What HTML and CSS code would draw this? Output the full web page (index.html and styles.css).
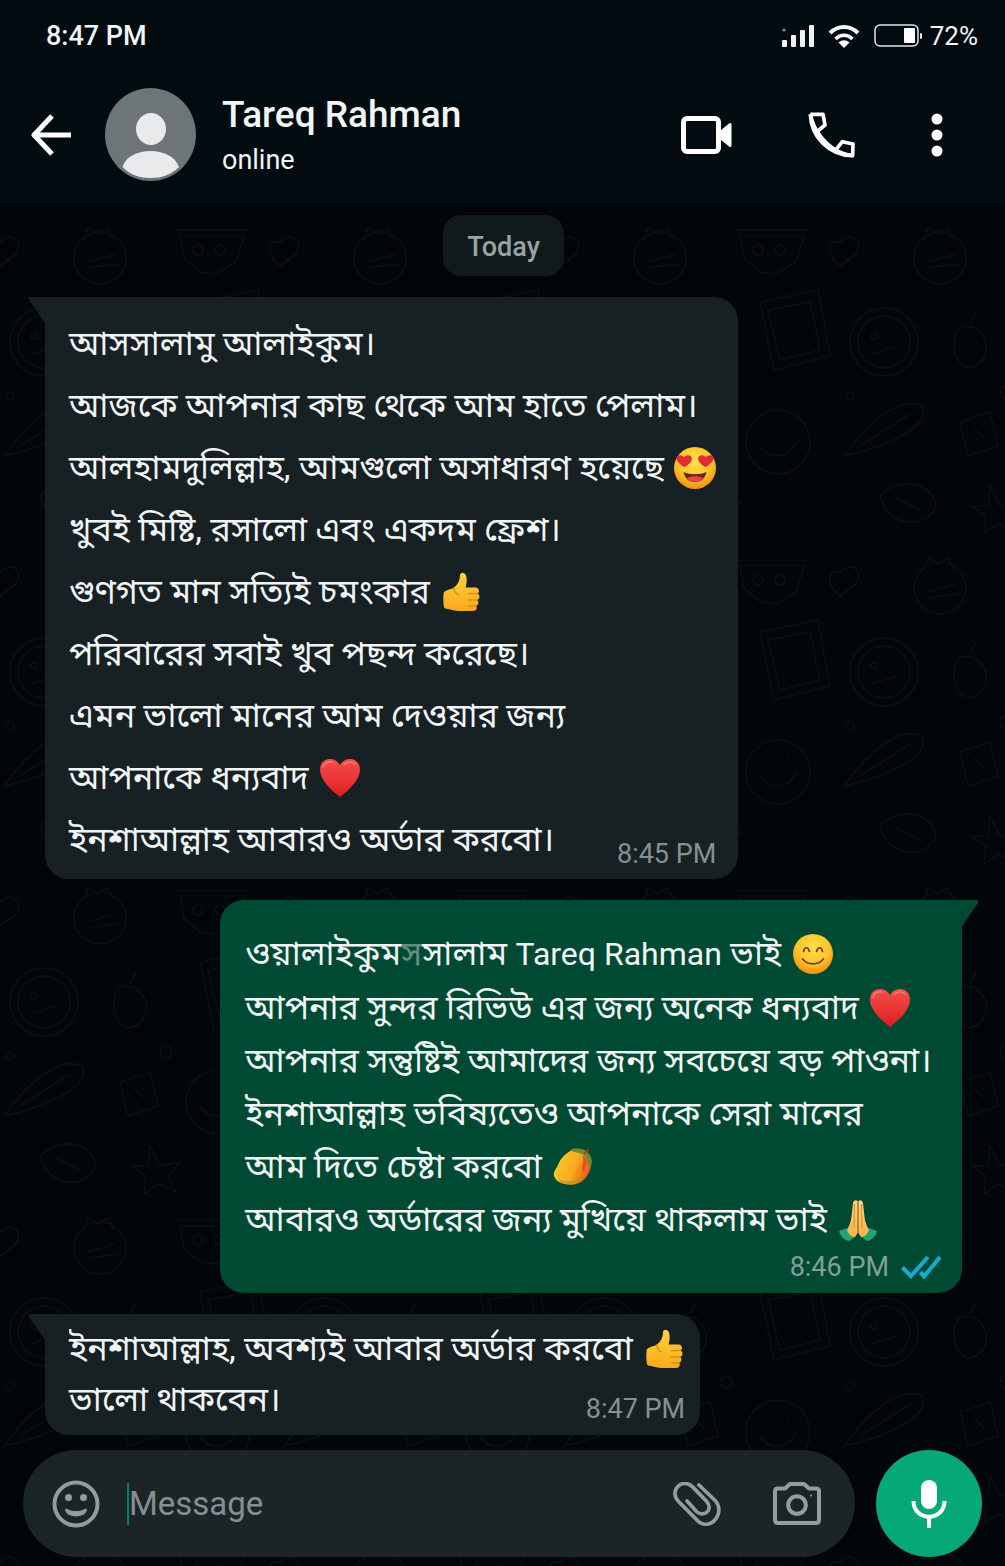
FILE: index.html
```html
<!DOCTYPE html>
<html lang="bn">
<head>
    <meta charset="UTF-8">
    <meta name="viewport" content="width=device-width, initial-scale=1.0">
    <title>Tareq Rahman</title>
    <link rel="stylesheet" href="styles.css">
</head>
<body>
    <!-- shared emoji drawings -->
    <svg class="defs" width="0" height="0" aria-hidden="true">
        <defs>
            <radialGradient id="face" cx="50%" cy="35%" r="65%">
                <stop offset="0" stop-color="#ffe04a"/>
                <stop offset="0.6" stop-color="#fdc52c"/>
                <stop offset="1" stop-color="#f08f16"/>
            </radialGradient>
            <linearGradient id="hand" x1="0" y1="0" x2="0" y2="1">
                <stop offset="0" stop-color="#ffd23c"/>
                <stop offset="1" stop-color="#f9a91c"/>
            </linearGradient>
            <linearGradient id="red" x1="0" y1="0" x2="0" y2="1">
                <stop offset="0" stop-color="#f4504a"/>
                <stop offset="1" stop-color="#e01c22"/>
            </linearGradient>
            <linearGradient id="fruit" x1="0" y1="0.2" x2="1" y2="0.6">
                <stop offset="0" stop-color="#f9cf2c"/>
                <stop offset="0.6" stop-color="#f6a81c"/>
                <stop offset="1" stop-color="#e8501e"/>
            </linearGradient>
            <linearGradient id="palm" x1="0" y1="0" x2="0" y2="1">
                <stop offset="0" stop-color="#ffd878"/>
                <stop offset="1" stop-color="#f9b24a"/>
            </linearGradient>
            <symbol id="heart-eyes" viewBox="0 0 42 44">
                <circle cx="21" cy="22" r="21" fill="url(#face)"/>
                <path d="M10 21C4 17 1 13 3 10.500C5 8.500 8.500 9 10 11.500C12 8.500 16 8.500 17.500 11C19 15 15 19 10 21Z" fill="#e62a33"/>
                <path d="M32 21C38 17 41 13 39 10.500C37 8.500 33.500 9 32 11.500C30 8.500 26 8.500 24.500 11C23 15 27 19 32 21Z" fill="#e62a33"/>
                <path d="M9.500 26C16 29 26 29 32.500 26C31 33 26.500 36 21 36S11 33 9.500 26Z" fill="#6d2410"/>
                <path d="M13 32C17 29.500 25 29.500 29 32C27 34.700 24.500 36 21 36S15 34.700 13 32Z" fill="#e4473d"/>
            </symbol>
            <symbol id="smile" viewBox="0 0 42 44">
                <circle cx="21" cy="22" r="20" fill="url(#face)"/>
                <path d="M11.500 19.500C12.500 14.500 16 14.500 17.500 19.500M24.500 19.500C26 14.500 29.500 14.500 30.500 19.500M10.500 27C16 33.500 26 33.500 31.500 27" fill="none" stroke="#7a3d10" stroke-width="1.700" stroke-linecap="round"/>
            </symbol>
            <symbol id="thumb" viewBox="0 0 42 44">
                <path d="M4 22C7 19.500 11 19.500 14 17.500C18 14.500 20 10 20 5.500C20 2 24.500 1.500 26 5.500C27.300 9.500 26.500 14 25.500 17.500L35.500 17.500C39.500 18 40 22.500 37.500 23.500C40.500 25 40 29.300 37 30C39.500 31.500 38.500 35.300 36 36C38 38 36 41 33 41L18 41C13 41 9 38.500 5 38.500C3 38 3 24 4 22Z" fill="url(#hand)"/>
                <path d="M37.500 23.500L28 23.700M37 30L28 30M36 36L28 35.800M14 18C14 21 16 24 19 25" fill="none" stroke="#e08a10" stroke-width="1.300" stroke-linecap="round"/>
            </symbol>
            <symbol id="heart" viewBox="0 0 42 44">
                <path d="M21 41C12 34 1 24 1 13.500C1 7 5.500 3 11 3C15.500 3 19 5.500 21 9C23 5.500 26.500 3 31 3C36.500 3 41 7 41 13.500C41 24 30 34 21 41Z" fill="url(#red)"/>
                <path d="M4 11C5.500 6.500 9.500 5 13 6M25 8.500C28 5.500 33 5 36 8" fill="none" stroke="#ff9a90" stroke-width="1.600" stroke-linecap="round" opacity="0.600"/>
            </symbol>
            <symbol id="mango" viewBox="0 0 42 44">
                <path d="M2 31C1 27 4 24 6 20C9 12 16 5 25 4C33 3 40 9 39.500 18C39 28 32 38 22 39.500C14 40.500 4 38 2 31Z" fill="url(#fruit)"/>
                <path d="M18 5C23 2 30 3 34 7C40 10 41 17 38 23C35 20 36 14 32 10C28 7 22 8 18 5Z" fill="#6d8b2c"/>
                <path d="M30 10C36 12 36 20 31 27C28 23 34 16 30 10Z" fill="#ef4a22"/>
                <path d="M33 8L36 5" stroke="#a5402a" stroke-width="2" stroke-linecap="round"/>
                <path d="M6 34C14 39 27 37 34 26C31 35 25 39.500 17 39C12 38.500 8 37 6 34Z" fill="#b9901c" opacity="0.700"/>
            </symbol>
            <symbol id="pray" viewBox="0 0 42 44">
                <path d="M2 33L10 30L19 38L12 43C7 42 3 38 2 33Z" fill="#1ea672"/>
                <path d="M40 33L32 30L23 38L30 43C35 42 39 38 40 33Z" fill="#1ea672"/>
                <path d="M20.600 3C18 1 16 3 15.800 7L14.500 19C14 24 12 28 10 32C12 37 15 39 18 39L20.600 35Z" fill="url(#palm)"/>
                <path d="M21.400 3C24 1 26 3 26.200 7L27.500 19C28 24 30 28 32 32C30 37 27 39 24 39L21.400 35Z" fill="url(#palm)"/>
                <path d="M21 4L21 35M17.500 6L17 30M24.500 6L25 30" stroke="#d97f28" stroke-width="0.900"/>
            </symbol>
        </defs>
    </svg>

    <div class="phone">
        <header class="top">
            <div class="status">
                <span class="clock">8:47 PM</span>
                <div class="indicators">
                    <svg width="32" height="24" viewBox="0 0 32 24" fill="#eef4f5" aria-hidden="true">
                        <rect x="0" y="16" width="5" height="7" rx="1"/>
                        <rect x="9" y="11" width="5" height="12" rx="1"/>
                        <rect x="18" y="6" width="5" height="17" rx="1"/>
                        <rect x="27" y="1" width="5" height="22" rx="1"/>
                        <circle cx="2" cy="6" r="1.500" opacity="0.600"/>
                    </svg>
                    <svg width="32" height="24" viewBox="0 0 32 24" fill="none" stroke="#f4f8f9" stroke-width="4" aria-hidden="true">
                        <path d="M2 9C10 1 22 1 30 9"/>
                        <path d="M7.500 15C12.500 10 19.500 10 24.500 15" stroke-width="3.500"/>
                        <path d="M10.500 18.500C14 15.500 18 15.500 21.500 18.500L16 24Z" fill="#f4f8f9" stroke="none"/>
                    </svg>
                    <svg width="49" height="24" viewBox="0 0 49 24" aria-hidden="true">
                        <rect x="1" y="1" width="43" height="21" rx="5" fill="none" stroke="#dfe6e8" stroke-width="1.500"/>
                        <rect x="30" y="4" width="11" height="15" rx="1" fill="#fff"/>
                        <rect x="46" y="9" width="2" height="6" rx="1" fill="#dfe6e8"/>
                    </svg>
                    <span class="percent">72%</span>
                </div>
            </div>

            <div class="contact">
                <button class="icon-btn" aria-label="Back">
                    <svg width="40" height="42" viewBox="0 0 40 42" fill="none" stroke="#fff" stroke-width="5">
                        <path d="M21 2L3 21L21 40M3 21L40 21" stroke-linejoin="round"/>
                    </svg>
                </button>
                <svg class="avatar" width="91" height="93" viewBox="0 0 91 93" aria-hidden="true">
                    <ellipse cx="45.500" cy="46.500" rx="45.500" ry="46.500" fill="#6d7579"/>
                    <ellipse cx="46" cy="41" rx="15" ry="16" fill="#e9eaeb"/>
                    <path d="M17.500 79C21 68 33 63 45.500 63S70 68 74 79C66 87 56 90 45.500 90S25 87 17.500 79Z" fill="#e9eaeb"/>
                </svg>
                <div class="who">
                    <h1 class="name">Tareq Rahman</h1>
                    <p class="presence">online</p>
                </div>
                <div class="actions">
                    <button class="icon-btn" aria-label="Video call">
                        <svg width="51" height="38" viewBox="0 0 51 38">
                            <rect x="2.500" y="2.500" width="35" height="33" rx="3.500" fill="none" stroke="#fff" stroke-width="5"/>
                            <path d="M39 15L48 7.500C49.500 6.500 50.500 7 50.500 8.500L50.500 29.500C50.500 31 49.500 31.500 48 30.500L39 23Z" fill="#fff"/>
                        </svg>
                    </button>
                    <button class="icon-btn" aria-label="Voice call">
                        <svg width="47" height="46" viewBox="0 0 141 138" fill="none" stroke="#fff" stroke-width="11" stroke-linejoin="round">
                            <path d="M7 7L45 7L51 39L28 58M7 7C9 76 66 131 134 131L135 96L103 89L84 113"/>
                            <path d="M7 7C12 28 17 43 28 59C42 82 60 100 84 115C100 124 116 128 134 131"/>
                        </svg>
                    </button>
                    <button class="icon-btn" aria-label="More options">
                        <svg width="12" height="44" viewBox="0 0 12 44" fill="#fff">
                            <circle cx="6" cy="6" r="5.500"/>
                            <circle cx="6" cy="22" r="5.500"/>
                            <circle cx="6" cy="38" r="5.500"/>
                        </svg>
                    </button>
                </div>
            </div>
        </header>

        <main class="chat">
            <svg class="wallpaper" width="100%" height="100%" aria-hidden="true">
                <defs>
                    <pattern id="doodles" width="280" height="330" patternUnits="userSpaceOnUse">
                        <g fill="none" stroke="#091114" stroke-width="1.200">
                            <path d="M280 60C265 48 268 32 280 36M0 36C10 26 24 32 16 48L0 60"/>
                            <circle cx="100" cy="52" r="26"/>
                            <path d="M84 34L88 22L98 28L108 22L114 34M88 56L116 48M88 62L118 58"/>
                            <path d="M180 30L244 30L236 56L216 68L200 66L184 52ZM176 24L250 24"/>
                            <circle cx="198" cy="44" r="5"/>
                            <circle cx="220" cy="44" r="5"/>
                            <path d="M200 96L258 84L270 150L214 164ZM208 104L250 96L260 144L220 154Z"/>
                            <circle cx="44" cy="136" r="34"/>
                            <circle cx="44" cy="136" r="26"/>
                            <circle cx="34" cy="130" r="3"/>
                            <path d="M32 148L56 140"/>
                            <path d="M120 120C110 134 112 158 130 162C146 158 152 140 140 126C134 118 126 122 120 120ZM130 118L136 106"/>
                            <path d="M4 250C30 214 60 190 82 200C90 214 66 236 4 250ZM20 240L70 208"/>
                            <path d="M120 216L150 206L158 240L128 250ZM134 222L144 232"/>
                            <circle cx="218" cy="236" r="32"/>
                            <path d="M200 240C210 256 230 252 236 236M206 226L210 226M226 222L230 222"/>
                            <circle cx="166" cy="186" r="6"/>
                            <circle cx="10" cy="190" r="4"/>
                            <path d="M40 290C60 270 92 276 96 300C90 320 50 326 40 290ZM56 292L80 304"/>
                            <path d="M150 280L160 300L180 296L168 310L176 326L158 318L144 328L146 310L132 300L148 300Z"/>
                        </g>
                    </pattern>
                </defs>
                <rect width="100%" height="100%" fill="url(#doodles)"/>
            </svg>

            <div class="day">Today</div>

            <article class="bubble received long">
                <p>আসসালামু আলাইকুম।</p>
                <p>আজকে আপনার কাছ থেকে আম হাতে পেলাম।</p>
                <p>আলহামদুলিল্লাহ, আমগুলো অসাধারণ হয়েছে <svg class="emoji" role="img" aria-label="😍"><use href="#heart-eyes"/></svg></p>
                <p>খুবই মিষ্টি, রসালো এবং একদম ফ্রেশ।</p>
                <p>গুণগত মান সত্যিই চমংকার <svg class="emoji" role="img" aria-label="👍"><use href="#thumb"/></svg></p>
                <p>পরিবারের সবাই খুব পছন্দ করেছে।</p>
                <p>এমন ভালো মানের আম দেওয়ার জন্য</p>
                <p>আপনাকে ধন্যবাদ <svg class="emoji" role="img" aria-label="❤️"><use href="#heart"/></svg></p>
                <div class="last">
                    <p>ইনশাআল্লাহ আবারও অর্ডার করবো।</p>
                    <time class="time">8:45 PM</time>
                </div>
            </article>

            <article class="bubble sent">
                <p>ওয়ালাইকুম<span class="faded">স</span>সালাম <span class="latin">Tareq Rahman</span> ভাই <svg class="emoji" role="img" aria-label="😊"><use href="#smile"/></svg></p>
                <p>আপনার সুন্দর রিভিউ এর জন্য অনেক ধন্যবাদ <svg class="emoji" role="img" aria-label="❤️"><use href="#heart"/></svg></p>
                <p>আপনার সন্তুষ্টিই আমাদের জন্য সবচেয়ে বড় পাওনা।</p>
                <p>ইনশাআল্লাহ ভবিষ্যতেও আপনাকে সেরা মানের</p>
                <p>আম দিতে চেষ্টা করবো <svg class="emoji" role="img" aria-label="🥭"><use href="#mango"/></svg></p>
                <p>আবারও অর্ডারের জন্য মুখিয়ে থাকলাম ভাই <svg class="emoji" role="img" aria-label="🙏"><use href="#pray"/></svg></p>
                <div class="receipt">
                    <time class="time">8:46 PM</time>
                    <svg width="40" height="24" viewBox="0 0 40 24" fill="none" stroke="#14acd0" stroke-width="4" role="img" aria-label="Read">
                        <path d="M1.500 12.500L10 21L27 2M19.500 17L23 21.500L39 2"/>
                    </svg>
                </div>
            </article>

            <article class="bubble received short">
                <p>ইনশাআল্লাহ, অবশ্যই আবার অর্ডার করবো <svg class="emoji" role="img" aria-label="👍"><use href="#thumb"/></svg></p>
                <div class="last">
                    <p>ভালো থাকবেন।</p>
                    <time class="time">8:47 PM</time>
                </div>
            </article>

            <form class="composer">
                <div class="field">
                    <button class="icon-btn" type="button" aria-label="Emoji">
                        <svg width="48" height="48" viewBox="0 0 48 48" fill="#949c9f">
                            <circle cx="24" cy="24" r="21.500" fill="none" stroke="#949c9f" stroke-width="4"/>
                            <circle cx="16.500" cy="17.500" r="3.500"/>
                            <circle cx="31.500" cy="17.500" r="3.500"/>
                            <path d="M13 30C13 28.500 14.500 28.500 16 29.500C21 31.500 27 31.500 32 29.500C33.500 28.500 35 28.500 35 30C33 38.500 15 38.500 13 30Z"/>
                        </svg>
                    </button>
                    <input class="text" type="text" placeholder="Message" aria-label="Message">
                    <button class="icon-btn" type="button" aria-label="Attach">
                        <svg width="48" height="44" viewBox="0 0 144 132" fill="none" stroke="#949c9f" stroke-width="11" stroke-linecap="round">
                            <path d="M78 9L127 56C158 92 115 146 78 120L16 58C-14 24 30 -14 58 14L100 57C124 84 91 107 72 90L42 57"/>
                        </svg>
                    </button>
                    <button class="icon-btn" type="button" aria-label="Camera">
                        <svg width="48" height="43" viewBox="0 0 48 43" fill="none" stroke="#949c9f" stroke-width="4" stroke-linejoin="round">
                            <path d="M5 6.500L12 6.500L17 2L31 2L36 6.500L43 6.500Q46 6.500 46 9.500L46 38Q46 41 43 41L5 41Q2 41 2 38L2 9.500Q2 6.500 5 6.500Z"/>
                            <circle cx="24" cy="23" r="8.800"/>
                            <circle cx="38" cy="13.500" r="1" fill="#949c9f" stroke="none"/>
                        </svg>
                    </button>
                </div>
                <button class="mic" type="button" aria-label="Record voice message">
                    <svg width="36" height="48" viewBox="0 0 36 48" fill="none" stroke="#fff" stroke-width="4">
                        <rect x="10" y="0" width="16" height="29" rx="8" fill="#fff" stroke="none"/>
                        <path d="M2.500 21C2.500 42 33.500 42 33.500 21M18 36L18 48"/>
                    </svg>
                </button>
            </form>
        </main>
    </div>
</body>
</html>
```

FILE: styles.css
```css
* {
    box-sizing: border-box;
}
body {
    margin: 0;
    background: #020609;
    color: #f1f5f6;
    font-family: Roboto, "Noto Sans Bengali", "Noto Sans", sans-serif;
}
p, h1 {
    margin: 0;
}
button {
    padding: 0;
    border: 0;
    background: none;
    cursor: pointer;
}
svg {
    display: block;
}
.defs {
    position: absolute;
}
.phone {
    display: flex;
    flex-direction: column;
    min-height: 100vh;
}

/* header */
.top {
    padding: 20px 27px 25px 31px;
    background: #010b10;
}
.status {
    display: flex;
    align-items: center;
    justify-content: space-between;
    padding-left: 15px;
    font-size: 26px;
    line-height: 32px;
}
.clock {
    font-size: 27px;
    font-weight: 500;
}
.indicators {
    display: flex;
    align-items: center;
    gap: 14px;
}
.percent {
    margin-left: -7px;
}
.contact {
    display: flex;
    align-items: center;
    padding-top: 36px;
}
.avatar {
    margin: 0 26px 0 34px;
}
.who {
    flex: 1;
    padding-top: 2px;
}
.name {
    font-size: 37px;
    font-weight: 500;
    line-height: 48px;
}
.presence {
    font-size: 27px;
    line-height: 42px;
}
.actions {
    display: flex;
    align-items: center;
    gap: 76px;
    padding-right: 35px;
}

/* messages */
.chat {
    position: relative;
    flex: 1;
    display: flex;
    flex-direction: column;
    gap: 21px;
    padding: 9px 43px 10px 45px;
}
.wallpaper {
    position: absolute;
    inset: 0;
}
.day {
    position: relative;
    align-self: center;
    padding: 3px 24px 0;
    border-radius: 18px;
    background: #10191c;
    color: #9aa2a5;
    font-size: 27px;
    font-weight: 500;
    line-height: 58px;
}
.bubble {
    position: relative;
    border-radius: 24px;
    font-size: 34px;
    white-space: nowrap;
}
.bubble::before {
    content: "";
    position: absolute;
    top: 0;
    width: 40px;
    height: 26px;
}
.received {
    align-self: flex-start;
    padding: 0 22px 0 24px;
    border-top-left-radius: 0;
    background: #172023;
}
.received::before {
    left: -16px;
    background: #172023;
    clip-path: polygon(0 0, 100% 0, 100% 100%, 40% 100%, 0 12%);
}
.long {
    padding-top: 15px;
    padding-bottom: 9px;
    line-height: 62px;
}
.sent {
    align-self: flex-end;
    padding: 27px 30px 5px 25px;
    border-top-right-radius: 0;
    background: #004a33;
    line-height: 53px;
}
.sent::before {
    right: -16px;
    background: #004a33;
    clip-path: polygon(0 0, 100% 0, 100% 12%, 60% 100%, 0 100%);
}
.short {
    padding-top: 9px;
    padding-right: 15px;
    padding-bottom: 10px;
    line-height: 51px;
}
.latin {
    font-size: 32px;
}
.emoji {
    display: inline-block;
    width: 42px;
    height: 44px;
    margin: -10px 0 -10px 2px;
    vertical-align: -1px;
}
.faded {
    opacity: 0.4;
}
.last {
    display: flex;
    align-items: flex-end;
    justify-content: space-between;
}
.time {
    color: #878f92;
    font-size: 27px;
    line-height: 31px;
}
.receipt {
    display: flex;
    align-items: center;
    justify-content: flex-end;
    gap: 12px;
    margin-right: -9px;
}
.sent .time {
    color: #7fa294;
    line-height: 42px;
}

/* composer */
.composer {
    position: relative;
    display: flex;
    gap: 21px;
    margin: -6px -20px 0 -22px;
}
.field {
    flex: 1;
    display: flex;
    align-items: center;
    padding: 0 34px 0 29px;
    border-radius: 54px;
    background: #1b2427;
}
.text {
    flex: 1;
    min-width: 0;
    height: 42px;
    margin: 0 54px 0 27px;
    padding: 0;
    border: 0;
    border-left: 2px solid #0b7d59;
    outline: 0;
    background: none;
    color: #f1f5f6;
    font-family: inherit;
    font-size: 33px;
}
.text::placeholder {
    color: #868e91;
    opacity: 1;
}
.field .icon-btn + .icon-btn {
    margin-left: 52px;
}
.mic {
    display: grid;
    place-items: center;
    width: 106px;
    height: 107px;
    border-radius: 50%;
    background: #06a876;
}
```
